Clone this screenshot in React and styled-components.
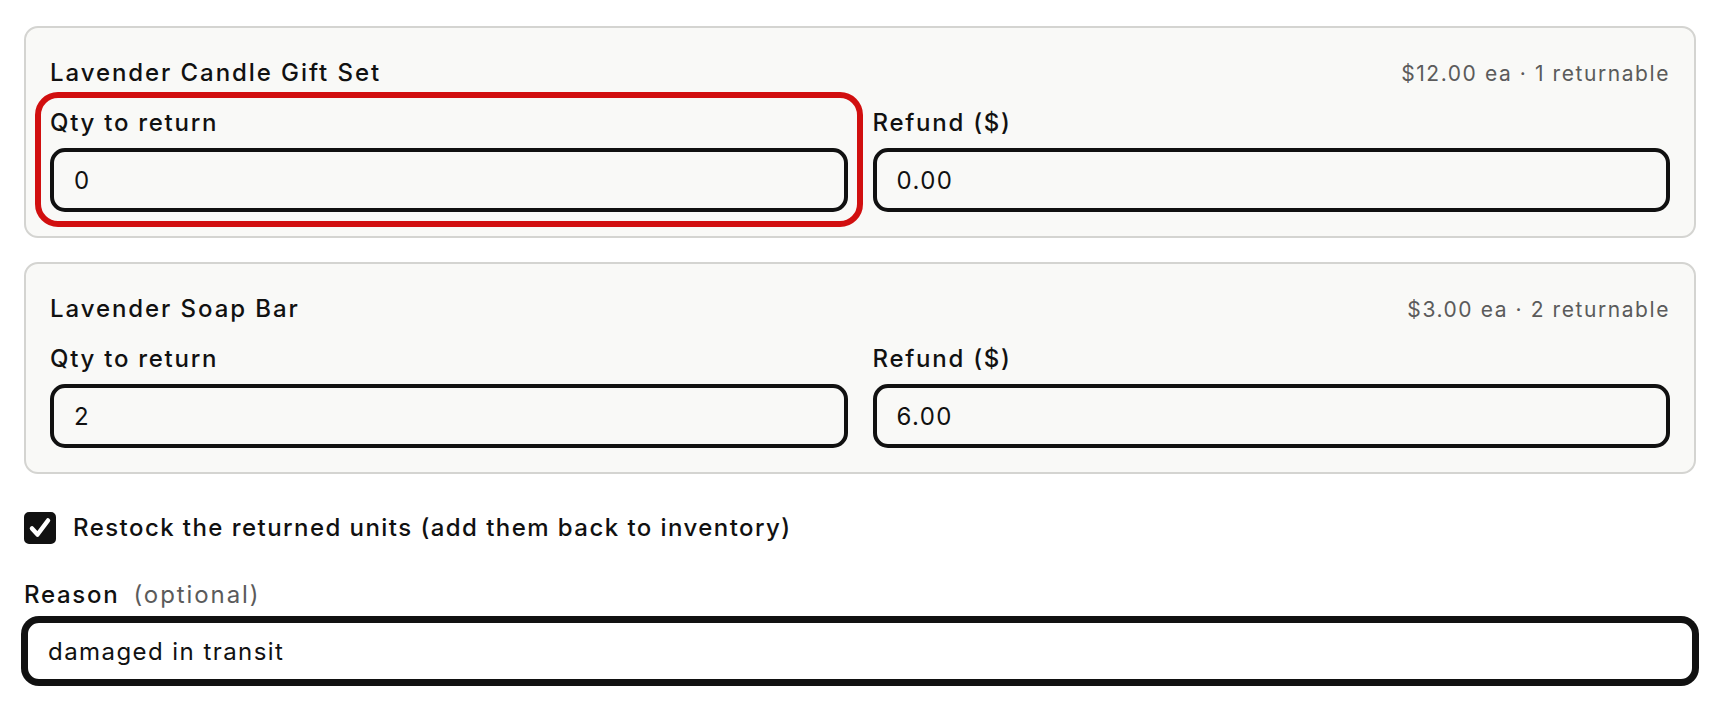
import React, { useState } from "react";
import styled, { createGlobalStyle } from "styled-components";

const GlobalStyle = createGlobalStyle`
  html, body {
    margin: 0;
    padding: 0;
    background: #ffffff;
  }
  body {
    font-family: Inter, "Noto Sans", "Liberation Sans", sans-serif;
    color: #111111;
    letter-spacing: 0.065em;
  }
  * {
    box-sizing: border-box;
  }
`;

const Page = styled.div`
  display: flex;
  flex-direction: column;
  padding: 26px 24px 20px;
`;

const ItemList = styled.div`
  display: flex;
  flex-direction: column;
  gap: 24px;
`;

const ItemCard = styled.div`
  background: #f9f9f7;
  border: 2px solid #d4d4d1;
  border-radius: 14px;
  padding: 29px 24px 24px;
`;

const ItemHeader = styled.div`
  display: flex;
  justify-content: space-between;
  align-items: baseline;
  line-height: 32px;
`;

const ItemName = styled.div`
  font-size: 24px;
  font-weight: 500;
  letter-spacing: 0.08em;
`;

const ItemMeta = styled.div`
  font-size: 21px;
  color: #5b5b5b;
  letter-spacing: 0.075em;
`;

const FieldRow = styled.div`
  display: grid;
  grid-template-columns: 1fr 1fr;
  gap: 25px;
  margin-top: 17px;
`;

const Field = styled.div`
  display: flex;
  flex-direction: column;
  gap: 9px;
  border-radius: 8px;
  outline: ${(p) => (p.$error ? "6px solid #d10f0f" : "none")};
  outline-offset: 9px;
`;

const Label = styled.label`
  font-size: 24px;
  font-weight: 500;
  line-height: 32px;
  letter-spacing: 0.072em;
`;

const Optional = styled.span`
  font-weight: 400;
  color: #5b5b5b;
  margin-left: 14px;
  letter-spacing: 0.08em;
`;

const Input = styled.input`
  width: 100%;
  height: 64px;
  border: 4px solid #111111;
  border-radius: 15px;
  background: ${(p) => (p.$white ? "#ffffff" : "transparent")};
  padding: 0 20px;
  font-family: inherit;
  font-size: 24px;
  letter-spacing: 0.06em;
  color: #111111;
  box-shadow: ${(p) => (p.$focused ? "0 0 0 3px #111111" : "none")};
  outline: none;
`;

const CheckRow = styled.label`
  display: flex;
  align-items: center;
  gap: 17px;
  margin-top: 38px;
  font-size: 24px;
  font-weight: 500;
  line-height: 32px;
  letter-spacing: 0.06em;
`;

const CheckBox = styled.span`
  width: 32px;
  height: 32px;
  border-radius: 5px;
  background: ${(p) => (p.$checked ? "#111111" : "#ffffff")};
  border: 2px solid #111111;
  display: flex;
  align-items: center;
  justify-content: center;
  flex-shrink: 0;
`;

const ReasonBlock = styled.div`
  display: flex;
  flex-direction: column;
  gap: 8px;
  margin-top: 35px;
`;

const items = [
  { name: "Lavender Candle Gift Set", price: 12, returnable: 1, qty: "0", refund: "0.00", error: true },
  { name: "Lavender Soap Bar", price: 3, returnable: 2, qty: "2", refund: "6.00", error: false },
];

export default function App() {
  const [restock, setRestock] = useState(true);
  const [reason, setReason] = useState("damaged in transit");

  return (
    <Page>
      <GlobalStyle />
      <ItemList>
        {items.map((item) => (
          <ItemCard key={item.name}>
            <ItemHeader>
              <ItemName>{item.name}</ItemName>
              <ItemMeta>
                ${item.price.toFixed(2)} ea · {item.returnable} returnable
              </ItemMeta>
            </ItemHeader>
            <FieldRow>
              <Field $error={item.error}>
                <Label>Qty to return</Label>
                <Input defaultValue={item.qty} />
              </Field>
              <Field>
                <Label>Refund ($)</Label>
                <Input defaultValue={item.refund} />
              </Field>
            </FieldRow>
          </ItemCard>
        ))}
      </ItemList>

      <CheckRow onClick={() => setRestock(!restock)}>
        <CheckBox $checked={restock}>
          {restock && (
            <svg width="24" height="24" viewBox="0 0 24 24" fill="none">
              <path d="M4 12.5l5.5 6L20 4.5" stroke="#ffffff" strokeWidth="4.5" strokeLinecap="round" strokeLinejoin="round" />
            </svg>
          )}
        </CheckBox>
        Restock the returned units (add them back to inventory)
      </CheckRow>

      <ReasonBlock>
        <Label>
          Reason<Optional>(optional)</Optional>
        </Label>
        <Input $white $focused value={reason} onChange={(e) => setReason(e.target.value)} />
      </ReasonBlock>
    </Page>
  );
}
